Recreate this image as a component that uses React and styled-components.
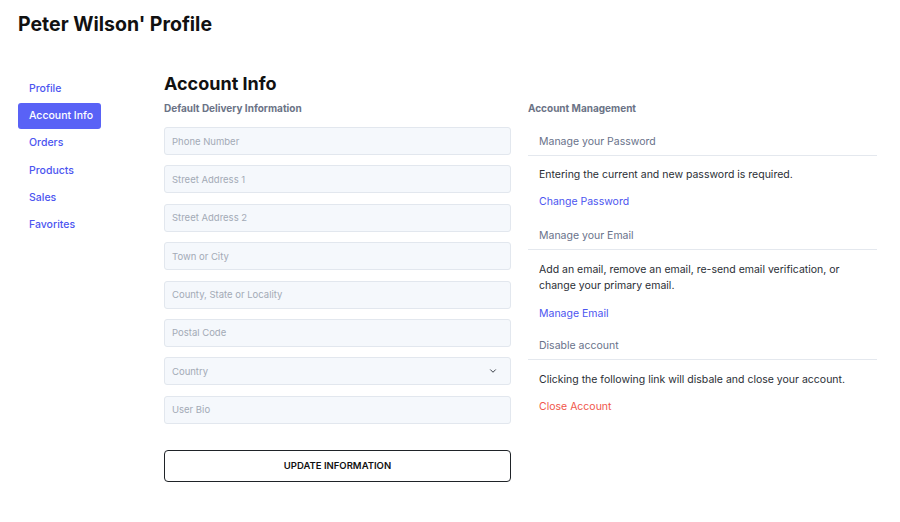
import React from "react";
import styled, { createGlobalStyle } from "styled-components";

const GlobalStyle = createGlobalStyle`
  body {
    margin: 0;
    background: #ffffff;
    font-family: "Inter", "Noto Sans", sans-serif;
    color: #1f2328;
  }
`;

const Page = styled.div`
  width: 900px;
  height: 522px;
  padding: 11px 18px 0;
  box-sizing: border-box;
`;

const Title = styled.h1`
  margin: 0;
  font-size: 19.5px;
  font-weight: 700;
  line-height: 26px;
  color: #111;
`;

const Body = styled.div`
  display: flex;
  margin-top: 34px;
`;

const Sidebar = styled.nav`
  width: 83px;
  display: flex;
  flex-direction: column;
  gap: 1.2px;
  margin-top: 5px;
  margin-right: 63px;
`;

const NavItem = styled.a`
  display: block;
  height: 26px;
  line-height: 26px;
  padding-left: 11px;
  border-radius: 3px;
  font-size: 10.5px;
  font-weight: 500;
  color: ${p => (p.$active ? "#ffffff" : "#4c55f0")};
  background: ${p => (p.$active ? "#5962f6" : "transparent")};
  cursor: pointer;
`;

const Main = styled.div`
  flex: 1;
`;

const Heading = styled.h2`
  margin: 0;
  font-size: 18px;
  font-weight: 700;
  line-height: 26px;
  color: #111;
`;

const Columns = styled.div`
  display: flex;
  gap: 17px;
`;

const FormCol = styled.div`
  width: 347px;
  display: flex;
  flex-direction: column;
`;

const SectionLabel = styled.div`
  font-size: 10px;
  font-weight: 700;
  color: #6b7386;
  line-height: 14px;
  margin-top: 4px;
  margin-bottom: ${p => p.$gap || 12}px;
`;

const Fields = styled.div`
  display: flex;
  flex-direction: column;
  gap: 10.4px;
`;

const Field = styled.div`
  height: 28px;
  box-sizing: border-box;
  border: 1px solid #e2e7ee;
  border-radius: 3px;
  background: #f5f8fc;
  display: flex;
  align-items: center;
  justify-content: space-between;
  padding: 0 12px 0 7px;
  font-size: 9.5px;
  color: #a3aab6;
`;

const Button = styled.button`
  margin-top: 26px;
  height: 32px;
  width: 100%;
  border: 1.3px solid #1f2328;
  border-radius: 4px;
  background: #ffffff;
  font-family: inherit;
  font-size: 9.5px;
  font-weight: 600;
  color: #111;
  cursor: pointer;
`;

const ManageCol = styled.div`
  width: 349px;
  display: flex;
  flex-direction: column;
`;

const RowHead = styled.div`
  padding: 0 11px;
  height: 27px;
  line-height: 27px;
  font-size: 10.5px;
  color: #69728a;
  border-bottom: 1px solid #e4e8ee;
  margin-top: ${p => p.$top || 0}px;
`;

const RowText = styled.p`
  margin: ${p => p.$top || 11}px 0 0;
  padding: 0 11px;
  font-size: 10.5px;
  line-height: 16px;
  color: #2a2e35;
`;

const RowLink = styled.a`
  display: block;
  padding: 0 11px;
  margin-top: ${p => p.$top || 11}px;
  font-size: 10.5px;
  line-height: 16px;
  color: ${p => (p.$danger ? "#f0564a" : "#4c55f0")};
  cursor: pointer;
`;

const Chevron = () => (
  <svg width="10" height="10" viewBox="0 0 24 24" fill="none" stroke="#3a3f48" strokeWidth="2.4" strokeLinecap="round" strokeLinejoin="round">
    <path d="M6 9l6 6 6-6" />
  </svg>
);

const navItems = ["Profile", "Account Info", "Orders", "Products", "Sales", "Favorites"];
const fields = [
  "Phone Number",
  "Street Address 1",
  "Street Address 2",
  "Town or City",
  "County, State or Locality",
  "Postal Code",
  "Country",
  "User Bio",
];

export default function App() {
  return (
    <>
      <GlobalStyle />
      <Page>
        <Title>Peter Wilson' Profile</Title>
        <Body>
          <Sidebar>
            {navItems.map(item => (
              <NavItem key={item} $active={item === "Account Info"}>
                {item}
              </NavItem>
            ))}
          </Sidebar>
          <Main>
            <Heading>Account Info</Heading>
            <Columns>
              <FormCol>
                <SectionLabel>Default Delivery Information</SectionLabel>
                <Fields>
                  {fields.map(f => (
                    <Field key={f}>
                      {f}
                      {f === "Country" && <Chevron />}
                    </Field>
                  ))}
                </Fields>
                <Button>UPDATE INFORMATION</Button>
              </FormCol>
              <ManageCol>
                <SectionLabel $gap={12.5}>Account Management</SectionLabel>
                <RowHead>Manage your Password</RowHead>
                <RowText>Entering the current and new password is required.</RowText>
                <RowLink>Change Password</RowLink>
                <RowHead $top={12.5}>Manage your Email</RowHead>
                <RowText $top={12}>
                  Add an email, remove an email, re-send email verification, or
                  <br />
                  change your primary email.
                </RowText>
                <RowLink $top={12}>Manage Email</RowLink>
                <RowHead $top={10}>Disable account</RowHead>
                <RowText $top={12}>Clicking the following link will disbale and close your account.</RowText>
                <RowLink $danger>Close Account</RowLink>
              </ManageCol>
            </Columns>
          </Main>
        </Body>
      </Page>
    </>
  );
}
